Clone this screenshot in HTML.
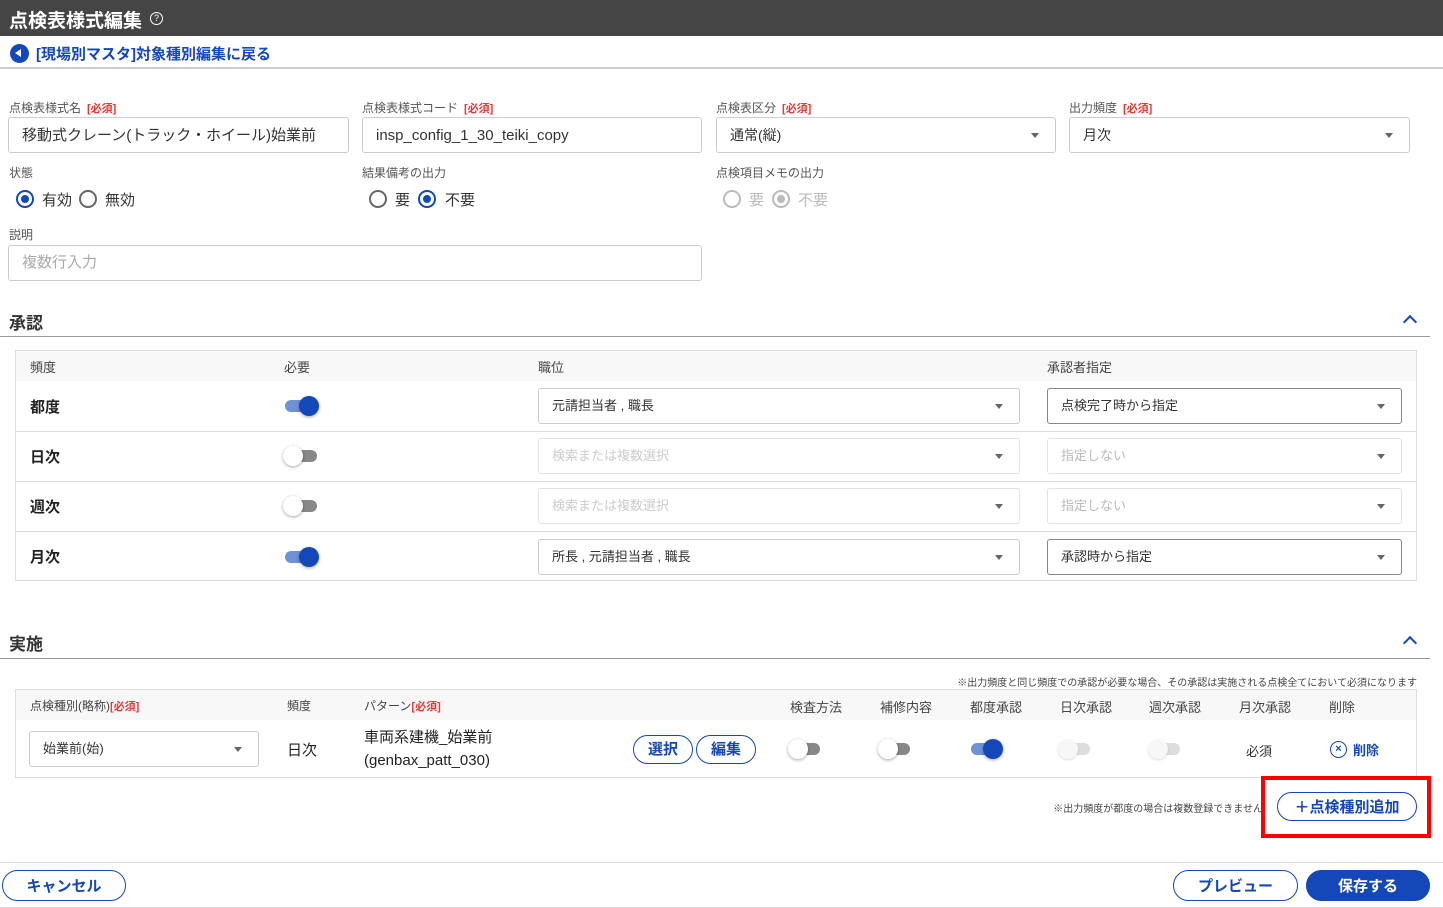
<!DOCTYPE html>
<html><head><meta charset="utf-8"><style>
*{box-sizing:border-box;margin:0;padding:0}
body{width:1443px;height:908px;position:relative;background:#fff;font-family:"Liberation Sans","Noto Sans CJK JP",sans-serif;color:#222;overflow:hidden}
.a{position:absolute}
.lbl{font-size:12px;color:#555;white-space:nowrap}
.req{color:#e53935;font-weight:bold;font-size:11px;margin-left:6px}
.inp{position:absolute;border:1px solid #ccc;border-radius:3px;height:36px;font-size:15px;line-height:34px;padding-left:13px;color:#333;background:#fff;white-space:nowrap}
.sel::after{content:"";position:absolute;right:16px;top:15px;border:4px solid transparent;border-top:5px solid #666}
.sm{font-size:13px;padding-left:13px}
.dis{color:#ccc}
.rad{position:absolute;width:18px;height:18px;border-radius:50%;border:2px solid #666}
.rad.on{border-color:#1447b8}
.rad.on::after{content:"";position:absolute;left:3px;top:3px;width:8px;height:8px;border-radius:50%;background:#1447b8}
.rt{position:absolute;font-size:15px;color:#333}
.tg{position:absolute;width:32px;height:12px;border-radius:6px}
.tg i{position:absolute;top:-4px;width:20px;height:20px;border-radius:50%;box-shadow:0 1px 3px rgba(0,0,0,.35)}
.tg.on{background:#6f92d6}.tg.on i{right:-2px;background:#1447b8}
.tg.off{background:#888}.tg.off i{left:-2px;background:#fff}
.tg.dd{background:#ddd}.tg.dd i{left:-2px;background:#f7f7f7;box-shadow:0 1px 2px rgba(0,0,0,.15)}
.hd{font-size:13px;color:#444;white-space:nowrap}
.btn{position:absolute;border:1.5px solid #1447b8;border-radius:16px;color:#1447b8;font-weight:bold;text-align:center;background:#fff}
.sec{position:absolute;font-size:17px;font-weight:bold;color:#333}
.chev{position:absolute;width:10px;height:10px;border-left:2px solid #1447b8;border-top:2px solid #1447b8;transform:rotate(45deg)}
</style></head><body>
<div class="a" style="left:0;top:0;width:1443px;height:36px;background:#454545"></div>
<div class="a" style="left:9px;top:6px;font-size:19px;font-weight:bold;color:#fff">点検表様式編集</div>
<div class="a" style="left:150px;top:12px;width:13px;height:13px;border:1.5px solid #fff;border-radius:50%;color:#fff;font-size:9px;text-align:center;line-height:10px">?</div>
<div class="a" style="left:0;top:67px;width:1443px;height:2px;background:#ccc"></div>
<div class="a" style="left:10px;top:44px;width:19px;height:19px;border-radius:50%;background:#1447b8"></div>
<div class="a" style="left:15px;top:49px;border:4.5px solid transparent;border-right:6px solid #fff;border-left:0"></div>
<div class="a" style="left:36px;top:43px;font-size:15px;font-weight:bold;color:#1447b8">[現場別マスタ]対象種別編集に戻る</div>

<div class="a lbl" style="left:9px;top:99px">点検表様式名<span class="req">[必須]</span></div>
<div class="a lbl" style="left:362px;top:99px">点検表様式コード<span class="req">[必須]</span></div>
<div class="a lbl" style="left:716px;top:99px">点検表区分<span class="req">[必須]</span></div>
<div class="a lbl" style="left:1069px;top:99px">出力頻度<span class="req">[必須]</span></div>
<div class="inp" style="left:8px;top:117px;width:341px;line-height:36px">移動式クレーン(トラック・ホイール)始業前</div>
<div class="inp" style="left:362px;top:117px;width:340px;line-height:36px">insp_config_1_30_teiki_copy</div>
<div class="inp sel" style="left:716px;top:117px;width:340px;font-size:14px">通常(縦)</div>
<div class="inp sel" style="left:1069px;top:117px;width:341px;font-size:14px">月次</div>

<div class="a lbl" style="left:9px;top:164px">状態</div>
<div class="a lbl" style="left:362px;top:164px">結果備考の出力</div>
<div class="a lbl" style="left:716px;top:164px">点検項目メモの出力</div>
<div class="rad on" style="left:16px;top:190px"></div><div class="rt" style="left:42px;top:189px">有効</div>
<div class="rad" style="left:79px;top:190px"></div><div class="rt" style="left:105px;top:189px">無効</div>
<div class="rad" style="left:369px;top:190px"></div><div class="rt" style="left:395px;top:189px">要</div>
<div class="rad on" style="left:418px;top:190px"></div><div class="rt" style="left:445px;top:189px">不要</div>
<div class="rad" style="left:723px;top:190px;border-color:#bbb"></div><div class="rt" style="left:749px;top:189px;color:#bbb">要</div>
<div class="rad on" style="left:772px;top:190px;border-color:#bbb"></div><div class="rt" style="left:798px;top:189px;color:#bbb">不要</div>
<style>.rad.on[style*="bbb"]::after{background:#bbb}</style>

<div class="a lbl" style="left:9px;top:226px">説明</div>
<div class="inp" style="left:8px;top:245px;width:694px;color:#aaa">複数行入力</div>

<div class="sec" style="left:9px;top:309px">承認</div>
<div class="chev" style="left:1405px;top:317px"></div>
<div class="a" style="left:0;top:336px;width:1430px;height:1px;background:#999"></div>

<div class="a" style="left:15px;top:350px;width:1402px;height:231px;border:1px solid #ddd"></div>
<div class="a" style="left:16px;top:351px;width:1400px;height:30px;background:#f8f8f8"></div>
<div class="a hd" style="left:30px;top:357px">頻度</div>
<div class="a hd" style="left:284px;top:357px">必要</div>
<div class="a hd" style="left:538px;top:357px">職位</div>
<div class="a hd" style="left:1047px;top:357px">承認者指定</div>
<div class="a" style="left:16px;top:431px;width:1400px;height:1px;background:#ddd"></div>
<div class="a" style="left:16px;top:481px;width:1400px;height:1px;background:#ddd"></div>
<div class="a" style="left:16px;top:531px;width:1400px;height:1px;background:#ddd"></div>

<div class="a" style="left:30px;top:396px;font-size:15px;font-weight:bold">都度</div>
<div class="tg on" style="left:285px;top:400px"><i></i></div>
<div class="inp sel sm" style="left:538px;top:388px;width:482px">元請担当者 , 職長</div>
<div class="inp sel sm" style="left:1047px;top:388px;width:355px;border-color:#888">点検完了時から指定</div>

<div class="a" style="left:30px;top:446px;font-size:15px;font-weight:bold">日次</div>
<div class="tg off" style="left:285px;top:450px"><i></i></div>
<div class="inp sel sm dis" style="left:538px;top:438px;width:482px;border-color:#e3e3e3">検索または複数選択</div>
<div class="inp sel sm dis" style="left:1047px;top:438px;width:355px;border-color:#e3e3e3;color:#bbb">指定しない</div>

<div class="a" style="left:30px;top:496px;font-size:15px;font-weight:bold">週次</div>
<div class="tg off" style="left:285px;top:500px"><i></i></div>
<div class="inp sel sm dis" style="left:538px;top:488px;width:482px;border-color:#e3e3e3">検索または複数選択</div>
<div class="inp sel sm dis" style="left:1047px;top:488px;width:355px;border-color:#e3e3e3;color:#bbb">指定しない</div>

<div class="a" style="left:30px;top:546px;font-size:15px;font-weight:bold">月次</div>
<div class="tg on" style="left:285px;top:551px"><i></i></div>
<div class="inp sel sm" style="left:538px;top:539px;width:482px">所長 , 元請担当者 , 職長</div>
<div class="inp sel sm" style="left:1047px;top:539px;width:355px;border-color:#888">承認時から指定</div>

<div class="sec" style="left:9px;top:630px">実施</div>
<div class="chev" style="left:1405px;top:638px"></div>
<div class="a" style="left:0;top:658px;width:1430px;height:1px;background:#999"></div>
<div class="a" style="right:26px;top:674px;font-size:10px;color:#444">※出力頻度と同じ頻度での承認が必要な場合、その承認は実施される点検全てにおいて必須になります</div>

<div class="a" style="left:15px;top:689px;width:1402px;height:89px;border:1px solid #ddd"></div>
<div class="a" style="left:16px;top:690px;width:1400px;height:30px;background:#f8f8f8"></div>
<div class="a hd" style="left:30px;top:697px;font-size:12px">点検種別(略称)<span style="color:#e53935;font-weight:bold;font-size:11px">[必須]</span></div>
<div class="a hd" style="left:287px;top:697px;font-size:12px">頻度</div>
<div class="a hd" style="left:364px;top:697px;font-size:12px">パターン<span style="color:#e53935;font-weight:bold;font-size:11px">[必須]</span></div>
<div class="a hd" style="left:790px;top:697px">検査方法</div>
<div class="a hd" style="left:880px;top:697px">補修内容</div>
<div class="a hd" style="left:970px;top:697px">都度承認</div>
<div class="a hd" style="left:1060px;top:697px">日次承認</div>
<div class="a hd" style="left:1149px;top:697px">週次承認</div>
<div class="a hd" style="left:1239px;top:697px">月次承認</div>
<div class="a hd" style="left:1329px;top:697px">削除</div>

<div class="inp sel sm" style="left:29px;top:731px;width:230px;height:36px">始業前(始)</div>
<div class="a" style="left:287px;top:739px;font-size:15px">日次</div>
<div class="a" style="left:364px;top:726px;font-size:15px;line-height:23px">車両系建機_始業前<br>(genbax_patt_030)</div>
<div class="btn" style="left:633px;top:735px;width:60px;height:29px;font-size:15px;line-height:28px">選択</div>
<div class="btn" style="left:696px;top:735px;width:60px;height:29px;font-size:15px;line-height:28px">編集</div>
<div class="tg off" style="left:790px;top:743px;width:30px"><i></i></div>
<div class="tg off" style="left:880px;top:743px;width:30px"><i></i></div>
<div class="tg on" style="left:971px;top:743px;width:30px"><i></i></div>
<div class="tg dd" style="left:1060px;top:743px;width:30px"><i></i></div>
<div class="tg dd" style="left:1150px;top:743px;width:30px"><i></i></div>
<div class="a" style="left:1246px;top:741px;font-size:13px;color:#333">必須</div>
<div class="a" style="left:1330px;top:741px;width:17px;height:17px;border:1.5px solid #1447b8;border-radius:50%;color:#1447b8;font-size:11px;text-align:center;line-height:14px;font-weight:bold">×</div>
<div class="a" style="left:1353px;top:740px;font-size:13px;color:#1447b8;font-weight:bold">削除</div>

<div class="a" style="right:180px;top:800px;font-size:10px;color:#444">※出力頻度が都度の場合は複数登録できません</div>
<div class="a" style="left:1261px;top:776px;width:170px;height:62px;border:4px solid #f00"></div>
<div class="btn" style="left:1277px;top:792px;width:140px;height:29px;font-size:15px;line-height:29px">＋点検種別追加</div>

<div class="a" style="left:0;top:862px;width:1443px;height:1px;background:#ddd;box-shadow:0 -3px 6px rgba(0,0,0,.05)"></div>
<div class="a" style="left:0;top:907px;width:1443px;height:1px;background:#ddd"></div>
<div class="btn" style="left:2px;top:870px;width:124px;height:31px;font-size:15px;line-height:32px">キャンセル</div>
<div class="btn" style="left:1173px;top:870px;width:125px;height:31px;font-size:15px;line-height:32px">プレビュー</div>
<div class="btn" style="left:1306px;top:870px;width:124px;height:31px;font-size:15px;line-height:32px;background:#1447b8;color:#fff">保存する</div>
</body></html>
